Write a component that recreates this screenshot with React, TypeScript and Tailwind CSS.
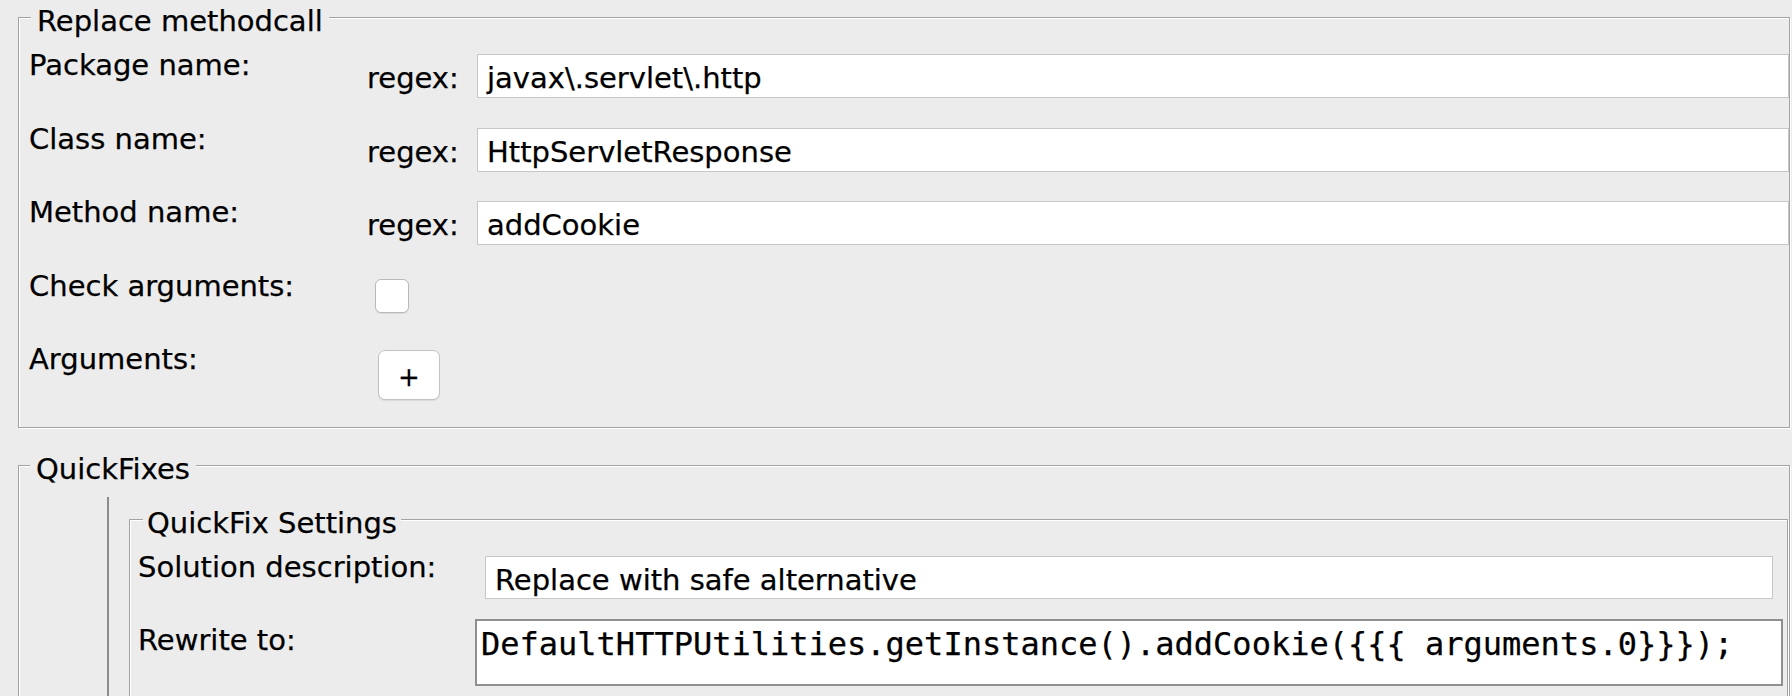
import React from 'react';

type GroupProps = {
  title: string;
  className: string;
  titleClass: string;
  children: React.ReactNode;
};

function Group({ title, className, titleClass, children }: GroupProps) {
  return (
    <div className={`relative shrink-0 border border-[#a3a3a3] shadow-[inset_1px_1px_0_#ffffff,1px_1px_0_#ffffff] ${className}`}>
      <span className={`absolute top-[-14px] bg-[#ececec] leading-[34px] whitespace-nowrap ${titleClass}`}>{title}</span>
      {children}
    </div>
  );
}

const matchRows = [
  { label: 'Package name:', value: 'javax\\.servlet\\.http' },
  { label: 'Class name:', value: 'HttpServletResponse' },
  { label: 'Method name:', value: 'addCookie' },
];

export default function App() {
  return (
    <div className="flex h-[696px] w-[1792px] flex-col overflow-hidden bg-[#ececec] font-['DejaVu_Sans',sans-serif] text-[29px] text-black [-webkit-text-stroke:0.25px_#000]">
      <Group title="Replace methodcall" className="ml-[18px] mt-[17px] h-[411px] w-[1772px] pl-[10px] pt-[30px]" titleClass="left-[12px] px-[6px]">
        {matchRows.map((row) => (
          <div key={row.label} className="flex h-[73.5px] items-start">
            <div className="w-[338px] shrink-0 leading-[34px]">{row.label}</div>
            <div className="mt-[13px] w-[110px] shrink-0 leading-[34px]">regex:</div>
            <div className="mt-[6px] h-[44px] flex-1 border border-[#c7c7c7] bg-white pl-[9px] pt-[6px] leading-[34px] whitespace-nowrap">
              {row.value}
            </div>
          </div>
        ))}
        <div className="flex h-[73.5px] items-start">
          <div className="w-[338px] shrink-0 leading-[34px]">Check arguments:</div>
          <div className="ml-[8px] mt-[10.5px] h-[34px] w-[34px] rounded-[6px] border border-[#b9b9b9] bg-white shadow-[0_1px_1px_rgba(0,0,0,0.08)]" />
        </div>
        <div className="flex h-[73.5px] items-start">
          <div className="w-[338px] shrink-0 leading-[34px]">Arguments:</div>
          <button
            type="button"
            className="ml-[11px] mt-[8px] flex h-[50px] w-[62px] items-center justify-center rounded-[7px] border border-[#c2c2c2] bg-white pt-[3px] text-[26px] leading-none shadow-[0_1px_1px_rgba(0,0,0,0.08)]"
          >
            +
          </button>
        </div>
      </Group>

      <Group title="QuickFixes" className="ml-[18px] mt-[37px] flex h-[400px] w-[1772px] items-start" titleClass="left-[11px] px-[6px]">
        <div className="mt-[31px] h-[300px] w-[90px] shrink-0 border-r-2 border-[#8c8c8c]" />
        <Group title="QuickFix Settings" className="ml-[20px] mt-[53px] h-[300px] w-[1659px] pl-[8px] pt-[30px]" titleClass="left-[13px] px-[4px]">
          <div className="flex h-[73px] items-start">
            <div className="w-[337px] shrink-0 leading-[34px]">Solution description:</div>
            <div className="ml-[10px] mr-[14px] mt-[6px] h-[43px] flex-1 border border-[#c7c7c7] bg-white pl-[9px] pt-[6px] leading-[34px] whitespace-nowrap">
              Replace with safe alternative
            </div>
          </div>
          <div className="flex h-[73px] items-start">
            <div className="w-[337px] shrink-0 leading-[34px]">Rewrite to:</div>
            <div className="mr-[4px] mt-[-4px] h-[67px] flex-1 border-2 border-[#8f8f8f] bg-white pl-[4px] pt-[4px] font-['DejaVu_Sans_Mono',monospace] text-[32px] leading-[38px] whitespace-nowrap">
              {'DefaultHTTPUtilities.getInstance().addCookie({{{ arguments.0}}});'}
            </div>
          </div>
        </Group>
      </Group>
    </div>
  );
}
